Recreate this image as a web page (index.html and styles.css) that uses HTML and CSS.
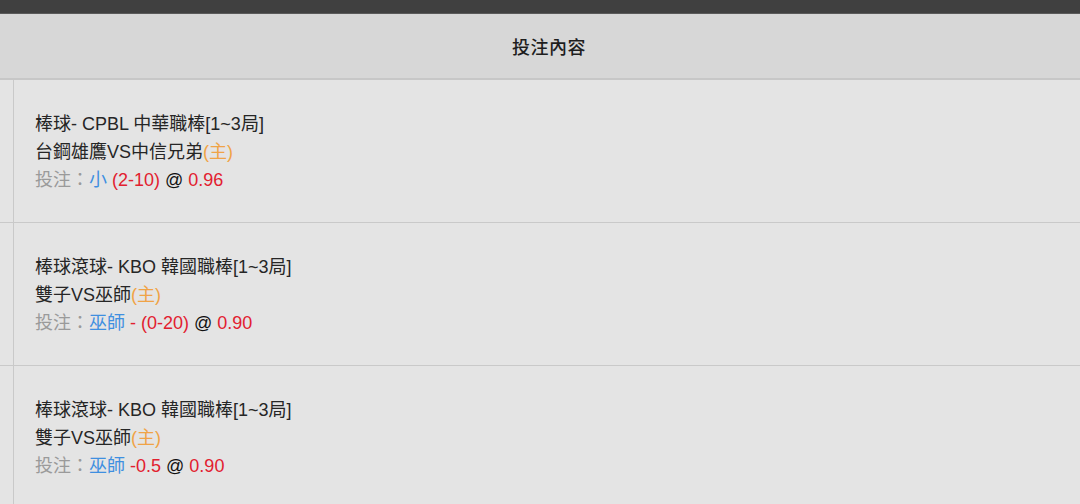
FILE: index.html
```html
<!DOCTYPE html>
<html lang="zh-Hant">
<head>
<meta charset="utf-8">
<link rel="stylesheet" href="styles.css">
</head>
<body>
<div class="topbar"></div>
<div class="thead">投注內容</div>
<div class="rows">
  <div class="row">
    <div class="side"></div>
    <div class="cell">
      <div class="line">棒球- CPBL 中華職棒[1~3局]</div>
      <div class="line">台鋼雄鷹VS中信兄弟<span class="home">(主)</span></div>
      <div class="line"><span class="lbl">投注：</span><span class="pick">小</span> <span class="red">(2-10)</span> <span class="at">@</span> <span class="red">0.96</span></div>
    </div>
  </div>
  <div class="row">
    <div class="side"></div>
    <div class="cell">
      <div class="line">棒球滾球- KBO 韓國職棒[1~3局]</div>
      <div class="line">雙子VS巫師<span class="home">(主)</span></div>
      <div class="line"><span class="lbl">投注：</span><span class="pick">巫師</span> <span class="red">- (0-20)</span> <span class="at">@</span> <span class="red">0.90</span></div>
    </div>
  </div>
  <div class="row">
    <div class="side"></div>
    <div class="cell">
      <div class="line">棒球滾球- KBO 韓國職棒[1~3局]</div>
      <div class="line">雙子VS巫師<span class="home">(主)</span></div>
      <div class="line"><span class="lbl">投注：</span><span class="pick">巫師</span> <span class="red">-0.5</span> <span class="at">@</span> <span class="red">0.90</span></div>
    </div>
  </div>
</div>
</body>
</html>
```

FILE: styles.css
```css
html, body {
  margin: 0;
  padding: 0;
}
body {
  width: 1080px;
  height: 504px;
  overflow: hidden;
  background: #e4e4e4;
  font-family: "Liberation Sans", Arial, "Noto Sans CJK TC", sans-serif;
  font-size: 18px;
  color: #262626;
}
.topbar {
  height: 13px;
  background: #404040;
  border-bottom: 1px solid #5a5a5a;
}
.thead {
  height: 64px;
  background: #d7d7d7;
  border-bottom: 2px solid #c7c7c7;
  padding-left: 18px;
  display: flex;
  align-items: center;
  justify-content: center;
  font-family: "Noto Sans CJK TC", sans-serif;
  font-weight: 500;
  font-size: 18px;
  color: #1e1e1e;
  letter-spacing: 0.5px;
}
.rows {
  display: flex;
  flex-direction: column;
}
.row {
  display: flex;
  height: 142px;
  border-bottom: 1px solid #c9c9c9;
}
.side {
  width: 13px;
  border-right: 1px solid #c9c9c9;
  background: #e4e4e4;
}
.cell {
  flex: 1;
  padding-left: 21px;
  padding-top: 2px;
  display: flex;
  flex-direction: column;
  justify-content: center;
}
.line {
  line-height: 28px;
  white-space: nowrap;
}
.home { color: #f0a346; }
.lbl { color: #9a9a9a; }
.pick { color: #3f8fe0; }
.red { color: #e2202f; }
.at { color: #111111; }
```
